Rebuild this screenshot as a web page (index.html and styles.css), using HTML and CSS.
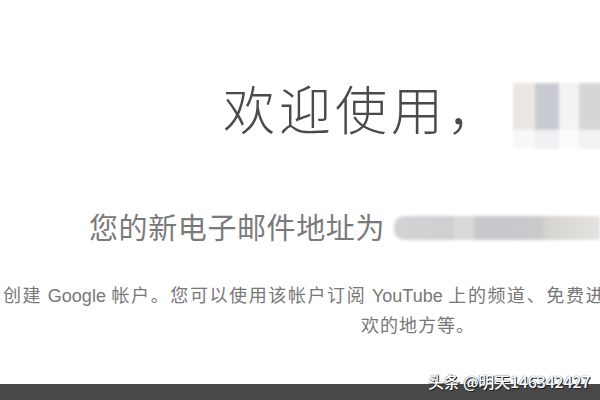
FILE: index.html
```html
<!DOCTYPE html>
<html lang="zh">
<head>
<meta charset="utf-8">
<link rel="stylesheet" href="styles.css">
</head>
<body>
<div class="page">
  <div class="title-row">
    <h1 class="title">欢迎使用，</h1>
    <div class="blur-name"></div>
  </div>
  <div class="email-row">
    <span class="email-label">您的新电子邮件地址为</span>
    <div class="blur-email"></div>
  </div>
  <div class="para-clip">
    <div class="para">
      <div class="para-line first">创建 <span class="latin">Google</span> 帐户。您可以使用该帐户订阅 <span class="latin">YouTube</span> 上的频道、免费进</div>
      <div class="para-line second">欢的地方等。</div>
    </div>
  </div>
  <div class="spacer"></div>
  <div class="taskbar"></div>
  <div class="watermark">头条 @明天146342427</div>
</div>
</body>
</html>
```
FILE: styles.css
```css
html, body {
  margin: 0;
  padding: 0;
  overflow: hidden;
  background: #ffffff;
}
.page {
  position: relative;
  width: 600px;
  height: 400px;
  display: flex;
  flex-direction: column;
  font-family: "Noto Sans CJK SC", "Liberation Sans", sans-serif;
}
.title-row {
  display: flex;
  align-items: flex-start;
  padding-top: 77px;
  padding-left: 223px;
  height: 72px;
}
.title {
  margin: 0;
  font-family: "Noto Sans CJK SC", sans-serif;
  font-weight: 300;
  font-size: 52px;
  line-height: 62px;
  color: #4a4a4a;
  letter-spacing: 4px;
  white-space: nowrap;
}
.blur-name {
  margin-left: 10px;
  margin-top: 6px;
  width: 100px;
  height: 66px;
  flex-shrink: 0;
  background:
    linear-gradient(to bottom, rgba(255,255,255,0) 0, rgba(255,255,255,0) 70%, rgba(255,255,255,0.7) 72%, rgba(255,255,255,0.7) 100%),
    linear-gradient(to right, #ebe7e3 0, #ebe7e3 22px, #c8ccd2 22px, #c8ccd2 46px, #f3f3f3 46px, #f3f3f3 66px, #d6d6d6 66px, #d6d6d6 100px);
  filter: blur(1.5px);
}
.email-row {
  display: flex;
  align-items: center;
  margin-top: 57px;
  padding-left: 89px;
  height: 40px;
}
.email-label {
  font-size: 29px;
  line-height: 40px;
  color: #7a7a7a;
  letter-spacing: 0.6px;
  white-space: nowrap;
}
.blur-email {
  margin-left: 9px;
  margin-top: 4px;
  flex: 1;
  height: 24px;
  border-radius: 10px 0 0 10px;
  background: linear-gradient(to right, #d2d2d4 0, #cfcfd2 60px, #dadad8 60px, #dadad8 80px, #c8c8cc 80px, #cacacd 150px, #d6d4d0 150px, #e4e2de 205px);
  filter: blur(1.5px);
}
.para-clip {
  margin-top: 34px;
  width: 600px;
  overflow: hidden;
}
.para {
  margin-left: 3px;
  width: 830px;
  font-size: 18px;
  line-height: 28px;
  color: #777777;
}
.para-line {
  white-space: nowrap;
  letter-spacing: 1.6px;
}
.para-line .latin {
  font-family: "Liberation Sans", sans-serif;
  letter-spacing: 0;
}
.para-line.first {
  text-align: left;
}
.para-line.second {
  text-align: center;
  letter-spacing: 1px;
}
.spacer {
  flex: 1;
}
.taskbar {
  height: 16px;
  background: #484848;
}
.watermark {
  position: absolute;
  left: 428px;
  top: 370px;
  font-size: 16px;
  line-height: 22px;
  color: #ffffff;
  font-weight: 500;
  letter-spacing: -0.2px;
  text-shadow: 1px 1px 0 #222, 0 0 1px #222;
  white-space: nowrap;
}
```
